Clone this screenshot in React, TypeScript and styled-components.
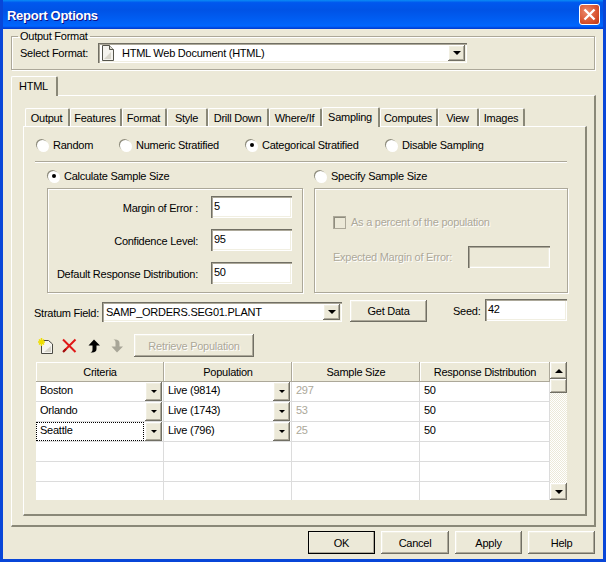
import React from "react";
import styled, { createGlobalStyle, css } from "styled-components";

const Global = createGlobalStyle`
  html, body { margin: 0; padding: 0; background: #ece9d8; }
  * { box-sizing: border-box; }
  body { font: 11px/14px "Liberation Sans", Arial, sans-serif; letter-spacing: -0.25px; color: #000; }
`;

const raised = css`
  background: #ece9d8;
  box-shadow: inset -1px -1px 0 #716f64, inset 1px 1px 0 #fff, inset -2px -2px 0 #aca899, inset 2px 2px 0 #f1efe2;
`;
const sunken = css`
  box-shadow: inset 1px 1px 0 #716f64, inset 2px 2px 0 #aca899, inset -1px -1px 0 #fff, inset -2px -2px 0 #f1efe2;
`;

const Dialog = styled.div`
  width: 606px;
  height: 562px;
  display: flex;
  flex-direction: column;
  background: #ece9d8;
  border: solid #0846d8;
  border-width: 0 3px 3px;
  overflow: hidden;
`;
const TitleBar = styled.div`
  flex: none;
  height: 29px;
  margin: 0 -3px;
  padding: 0 6px 0 7px;
  display: flex;
  align-items: center;
  justify-content: space-between;
  background: linear-gradient(180deg, #0a8cf5 0, #0058ee 9%, #0053e6 35%, #0062f8 80%, #0066ff 90%, #0042d8 97%, #003dd7 100%);
`;
const Title = styled.span`
  margin-top: 2px;
  font-size: 13px;
  font-weight: bold;
  letter-spacing: -0.27px;
  color: #fff;
  text-shadow: 1px 1px 0 #0f1089;
`;
const CloseButton = styled.div`
  width: 21px;
  height: 21px;
  border: 1px solid #fff;
  border-radius: 3px;
  background: radial-gradient(circle at 35% 35%, #eb8a6c, #d9532f 60%, #bf3614);
  display: flex;
  align-items: center;
  justify-content: center;
`;
const Content = styled.div`
  flex: 1;
  padding: 0 8px;
  display: flex;
  flex-direction: column;
`;
const OutputGroup = styled.fieldset`
  margin: 0;
  height: 41px;
  padding: 0 8px;
  border: 1px solid #aca899;
  box-shadow: 1px 1px 0 #fff, inset 1px 1px 0 #fff;
  min-width: 0;
`;
const Legend = styled.legend`
  padding: 0 2px;
  margin-left: -2px;
  line-height: 14px;
`;
const FormatRow = styled.div`
  display: flex;
  align-items: center;
  height: 20px;
`;
const FormatLabel = styled.span`
  width: 78px;
  flex: none;
`;
const Combo = styled.div<{ $w: number }>`
  width: ${(p) => p.$w}px;
  height: 20px;
  flex: none;
  padding: 2px 2px 2px 3px;
  background: #fff;
  display: flex;
  align-items: center;
  ${sunken}
`;
const ComboText = styled.span`
  flex: 1;
  padding-left: 1px;
  white-space: nowrap;
`;
const DropButton = styled.div`
  width: 17px;
  height: 100%;
  flex: none;
  display: flex;
  align-items: center;
  justify-content: center;
  ${raised}
  &::after {
    content: "";
    border: 4px solid transparent;
    border-top-color: #000;
    border-bottom-width: 0;
  }
`;
const TabStrip = styled.div<{ $inset: number }>`
  display: flex;
  align-items: flex-end;
  padding-left: ${(p) => p.$inset}px;
  position: relative;
  z-index: 1;
`;
const Tab = styled.div<{ $w: number; $h: number; $active?: boolean }>`
  width: ${(p) => p.$w}px;
  height: ${(p) => p.$h}px;
  flex: none;
  display: flex;
  align-items: center;
  justify-content: center;
  background: #ece9d8;
  border-radius: 2px 2px 0 0;
  border-top: 1px solid #fff;
  border-left: 1px solid #fff;
  border-right: 2px solid #8a8878;
  padding-right: 1px;
  ${(p) => p.$active && css`margin-bottom: -1px; padding-bottom: 2px;`}
`;
const OuterTabs = styled(TabStrip)`
  margin-top: 6px;
`;
const OuterPanel = styled.div`
  width: 585px;
  height: 432px;
  padding: 11px 0 0 11px;
  border-top: 1px solid #fff;
  border-left: 1px solid #fff;
  border-right: 2px solid #8a8878;
  border-bottom: 2px solid #8a8878;
`;
const InnerPanel = styled.div`
  width: 564px;
  height: 390px;
  padding: 11px 0 0 12px;
  border-top: 1px solid #fff;
  border-left: 1px solid #fff;
  border-right: 2px solid #8a8878;
  border-bottom: 2px solid #8a8878;
`;
const ModeRow = styled.div`
  display: flex;
  height: 14px;
  align-items: center;
`;
const Option = styled.label<{ $w?: number }>`
  display: flex;
  align-items: center;
  gap: 5px;
  flex: none;
  width: ${(p) => (p.$w ? `${p.$w}px` : "auto")};
  white-space: nowrap;
`;
const Radio = styled.span<{ $on?: boolean }>`
  width: 11px;
  height: 11px;
  margin-left: 1px;
  flex: none;
  border-radius: 50%;
  background: #fff;
  box-shadow: -1px -1px 0 #8f8d7e, 1px 1px 0 #fff;
  display: flex;
  align-items: center;
  justify-content: center;
  &::after {
    content: "";
    width: 4px;
    height: 4px;
    border-radius: 50%;
    background: ${(p) => (p.$on ? "#000" : "transparent")};
  }
`;
const Separator = styled.div`
  width: 532px;
  margin: 9px 0 6px -1px;
  border-top: 1px solid #aca899;
  border-bottom: 1px solid #fff;
`;
const SizeColumns = styled.div`
  display: flex;
  gap: 11px;
  margin-left: 11px;
`;
const SizeColumn = styled.div<{ $w: number }>`
  width: ${(p) => p.$w}px;
  flex: none;
`;
const SizeRadio = styled.div`
  height: 14px;
  display: flex;
`;
const SizeBox = styled.div`
  height: 105px;
  margin-top: 5px;
  border: 1px solid #aca899;
  box-shadow: 1px 1px 0 #fff, inset 1px 1px 0 #fff;
`;
const CalcBox = styled(SizeBox)`
  padding: 7px 10px 0 0;
  display: flex;
  flex-direction: column;
`;
const FieldRow = styled.div<{ $h: number }>`
  height: ${(p) => p.$h}px;
  display: flex;
  justify-content: flex-end;
  gap: 13px;
`;
const FieldLabel = styled.span`
  padding-top: 5px;
  white-space: nowrap;
`;
const Input = styled.div<{ $w: number; $off?: boolean }>`
  width: ${(p) => p.$w}px;
  height: 22px;
  flex: none;
  padding: 3px 0 0 3px;
  background: ${(p) => (p.$off ? "transparent" : "#fff")};
  ${sunken}
`;
const SpecifyBox = styled(SizeBox)`
  padding: 26px 0 0 18px;
  color: #aca899;
  text-shadow: 1px 1px 0 #fff;
`;
const CheckRow = styled.div`
  display: flex;
  align-items: center;
  gap: 5px;
  height: 14px;
`;
const CheckBox = styled.span`
  width: 13px;
  height: 13px;
  flex: none;
  border: 1px solid #aca899;
  box-shadow: inset 1px 1px 0 #8f8d7e;
`;
const MarginRow = styled.div`
  display: flex;
  align-items: center;
  margin-top: 17px;
`;
const MarginLabel = styled.span`
  width: 135px;
  flex: none;
  white-space: nowrap;
`;
const StratumRow = styled.div`
  display: flex;
  align-items: flex-start;
  height: 23px;
  margin: 6px 0 0 -2px;
`;
const StratumLabel = styled.span`
  width: 68px;
  flex: none;
  padding-top: 7px;
  white-space: nowrap;
`;
const StratumCombo = styled(Combo)`
  margin-top: 3px;
`;
const PushButton = styled.div<{ $w: number; $h?: number; $off?: boolean }>`
  width: ${(p) => p.$w}px;
  height: ${(p) => p.$h ?? 23}px;
  flex: none;
  display: flex;
  align-items: center;
  justify-content: center;
  ${raised}
  ${(p) => p.$off && css`color: #aca899; text-shadow: 1px 1px 0 #fff;`}
`;
const GetData = styled(PushButton)`
  margin: 1px 0 0 8px;
`;
const SeedLabel = styled.span`
  width: 32px;
  flex: none;
  margin-left: 26px;
  padding-top: 5px;
`;
const Toolbar = styled.div`
  display: flex;
  align-items: center;
  height: 23px;
  margin: 12px 0 0 2px;
`;
const ToolIcon = styled.span<{ $w: number }>`
  width: ${(p) => p.$w}px;
  flex: none;
  display: flex;
`;
const GridWrap = styled.div`
  display: flex;
  width: 531px;
  height: 138px;
  margin-top: 5px;
  overflow: hidden;
`;
const GridBody = styled.div`
  width: 514px;
  flex: none;
  background: #fff;
`;
const GridRow = styled.div`
  display: flex;
  height: 20px;
`;
const HeaderCell = styled.div<{ $w: number }>`
  width: ${(p) => p.$w}px;
  flex: none;
  display: flex;
  align-items: center;
  justify-content: center;
  ${raised}
  box-shadow: inset -1px -1px 0 #aca899, inset 1px 1px 0 #fff;
`;
const Cell = styled.div<{ $w: number; $dim?: boolean }>`
  width: ${(p) => p.$w}px;
  flex: none;
  display: flex;
  align-items: stretch;
  background: #fff;
  border-right: 1px solid #dcdcdc;
  border-bottom: 1px solid #dcdcdc;
  color: ${(p) => (p.$dim ? "#aca899" : "#000")};
`;
const CellText = styled.span<{ $focus?: boolean }>`
  flex: 1;
  margin: 0 1px 0 0;
  padding: 0 0 0 3px;
  border: 1px dotted ${(p) => (p.$focus ? "#000" : "transparent")};
`;
const CellDrop = styled(DropButton)`
  height: auto;
  margin-right: 1px;
  &::after {
    border-width: 3px;
    border-bottom-width: 0;
  }
`;
const ScrollBar = styled.div`
  width: 17px;
  flex: none;
  display: flex;
  flex-direction: column;
  background: repeating-conic-gradient(#fff 0 25%, #ece9d8 0 50%) 0 0 / 2px 2px;
`;
const ScrollButton = styled.div<{ $down?: boolean }>`
  height: 17px;
  flex: none;
  display: flex;
  align-items: center;
  justify-content: center;
  ${raised}
  &::after {
    content: "";
    border: 4px solid transparent;
    ${(p) => (p.$down ? "border-top-color: #000; border-bottom-width: 0;" : "border-bottom-color: #000; border-top-width: 0;")}
  }
`;
const ScrollThumb = styled.div`
  height: 14px;
  flex: none;
  ${raised}
`;
const ScrollTrack = styled.div`
  flex: 1;
`;
const Footer = styled.div`
  display: flex;
  justify-content: flex-end;
  gap: 6px;
  margin-top: 4px;
`;
const DefaultButton = styled(PushButton)`
  outline: 1px solid #000;
  outline-offset: -1px;
`;

const DocIcon = () => (
  <svg width="13" height="16" viewBox="0 0 13 16">
    <path d="M1.5.5H8.5L12.5 4.5V15.5H1.5Z" fill="#f4f3ee" stroke="#55554c" />
    <path d="M8.5.5V4.5H12.5" fill="#dcdad0" stroke="#55554c" />
    <path d="M3 14 10 7v7Z" fill="#d8d6cc" />
  </svg>
);
const NewIcon = () => (
  <svg width="15" height="16" viewBox="0 0 15 16">
    <path d="M3.5 2.5H10.5L14.5 6V15.5H3.5Z" fill="#f6f5f0" stroke="#4a4a44" />
    <path d="M6 14 13 8v6Z" fill="#d6d4ca" />
    <path d="M0 4H7M3.5 0V8M1 1.5 6 6.5M6 1.5 1 6.5" stroke="#eede00" strokeWidth="1.5" />
  </svg>
);
const DeleteIcon = () => (
  <svg width="15" height="15" viewBox="0 0 15 15">
    <path d="M1 1.5 13.5 14M13.5 1.5 1.5 13.5" stroke="#e01818" strokeWidth="2" fill="none" />
    <path d="M1 14 4 11" stroke="#a01010" strokeWidth="2" />
  </svg>
);
const UpIcon = () => (
  <svg width="14" height="14" viewBox="0 0 14 14">
    <path d="M7 0.5 13 6.5H9.5V10C9.5 12 8 13.5 5 13.5H3.5C5.5 12.5 5.5 11.5 5.5 10V6.5H1.5Z" fill="#000" />
  </svg>
);
const DownIcon = () => (
  <svg width="14" height="14" viewBox="0 0 14 14">
    <path d="M7 13.5 13 7.5H9.5V4C9.5 2 8 .5 5 .5H3.5C5.5 1.5 5.5 2.5 5.5 4V7.5H1.5Z" fill="#a8a698" />
  </svg>
);
const CloseIcon = () => (
  <svg width="13" height="13" viewBox="0 0 13 13">
    <path d="M1.5 1.5 11.5 11.5M11.5 1.5 1.5 11.5" stroke="#fff" strokeWidth="2.4" />
  </svg>
);

const innerTabs: [string, number][] = [
  ["Output", 45], ["Features", 52], ["Format", 45], ["Style", 41], ["Drill Down", 61],
  ["Where/If", 53], ["Sampling", 58], ["Computes", 58], ["View", 41], ["Images", 46],
];
const colWidths = [128, 128, 128, 130];
const rows = [
  ["Boston", "Live (9814)", "297", "50"],
  ["Orlando", "Live (1743)", "53", "50"],
  ["Seattle", "Live (796)", "25", "50"],
  ["", "", "", ""],
  ["", "", "", ""],
  ["", "", "", ""],
];

export default function App() {
  return (
    <Dialog>
      <Global />
      <TitleBar>
        <Title>Report Options</Title>
        <CloseButton><CloseIcon /></CloseButton>
      </TitleBar>
      <Content>
        <OutputGroup>
          <Legend>Output Format</Legend>
          <FormatRow>
            <FormatLabel>Select Format:</FormatLabel>
            <Combo $w={369}>
              <ToolIcon $w={20}><DocIcon /></ToolIcon>
              <ComboText>HTML Web Document (HTML)</ComboText>
              <DropButton />
            </Combo>
          </FormatRow>
        </OutputGroup>
        <OuterTabs $inset={0}>
          <Tab $w={47} $h={20} $active>HTML</Tab>
        </OuterTabs>
        <OuterPanel>
          <TabStrip $inset={2}>
            {innerTabs.map(([t, w]) => (
              <Tab key={t} $w={w} $h={t === "Sampling" ? 20 : 18} $active={t === "Sampling"}>{t}</Tab>
            ))}
          </TabStrip>
          <InnerPanel>
            <ModeRow>
              <Option $w={83}><Radio />Random</Option>
              <Option $w={126}><Radio />Numeric Stratified</Option>
              <Option $w={140}><Radio $on />Categorical Stratified</Option>
              <Option><Radio />Disable Sampling</Option>
            </ModeRow>
            <Separator />
            <SizeColumns>
              <SizeColumn $w={256}>
                <SizeRadio><Option><Radio $on />Calculate Sample Size</Option></SizeRadio>
                <CalcBox>
                  <FieldRow $h={33}>
                    <FieldLabel>Margin of Error :</FieldLabel>
                    <Input $w={81}>5</Input>
                  </FieldRow>
                  <FieldRow $h={33}>
                    <FieldLabel>Confidence Level:</FieldLabel>
                    <Input $w={81}>95</Input>
                  </FieldRow>
                  <FieldRow $h={22}>
                    <FieldLabel>Default Response Distribution:</FieldLabel>
                    <Input $w={81}>50</Input>
                  </FieldRow>
                </CalcBox>
              </SizeColumn>
              <SizeColumn $w={254}>
                <SizeRadio><Option><Radio />Specify Sample Size</Option></SizeRadio>
                <SpecifyBox>
                  <CheckRow><CheckBox />As a percent of the population</CheckRow>
                  <MarginRow>
                    <MarginLabel>Expected Margin of Error:</MarginLabel>
                    <Input $w={82} $off />
                  </MarginRow>
                </SpecifyBox>
              </SizeColumn>
            </SizeColumns>
            <StratumRow>
              <StratumLabel>Stratum Field:</StratumLabel>
              <StratumCombo $w={240}>
                <ComboText>SAMP_ORDERS.SEG01.PLANT</ComboText>
                <DropButton />
              </StratumCombo>
              <GetData $w={77} $h={22}>Get Data</GetData>
              <SeedLabel>Seed:</SeedLabel>
              <Input $w={82}>42</Input>
            </StratumRow>
            <Toolbar>
              <ToolIcon $w={24}><NewIcon /></ToolIcon>
              <ToolIcon $w={25}><DeleteIcon /></ToolIcon>
              <ToolIcon $w={23}><UpIcon /></ToolIcon>
              <ToolIcon $w={24}><DownIcon /></ToolIcon>
              <PushButton $w={120} $off>Retrieve Population</PushButton>
            </Toolbar>
            <GridWrap>
              <GridBody>
                <GridRow>
                  {["Criteria", "Population", "Sample Size", "Response Distribution"].map((h, i) => (
                    <HeaderCell key={h} $w={colWidths[i]}>{h}</HeaderCell>
                  ))}
                </GridRow>
                {rows.map((r, i) => (
                  <GridRow key={i}>
                    <Cell $w={colWidths[0]}>
                      <CellText $focus={r[0] === "Seattle"}>{r[0]}</CellText>
                      {r[0] && <CellDrop />}
                    </Cell>
                    <Cell $w={colWidths[1]}>
                      <CellText>{r[1]}</CellText>
                      {r[1] && <CellDrop />}
                    </Cell>
                    <Cell $w={colWidths[2]} $dim><CellText>{r[2]}</CellText></Cell>
                    <Cell $w={colWidths[3]}><CellText>{r[3]}</CellText></Cell>
                  </GridRow>
                ))}
              </GridBody>
              <ScrollBar>
                <ScrollButton />
                <ScrollThumb />
                <ScrollTrack />
                <ScrollButton $down />
              </ScrollBar>
            </GridWrap>
          </InnerPanel>
        </OuterPanel>
        <Footer>
          <DefaultButton $w={67}>OK</DefaultButton>
          <PushButton $w={68}>Cancel</PushButton>
          <PushButton $w={67}>Apply</PushButton>
          <PushButton $w={67}>Help</PushButton>
        </Footer>
      </Content>
    </Dialog>
  );
}
